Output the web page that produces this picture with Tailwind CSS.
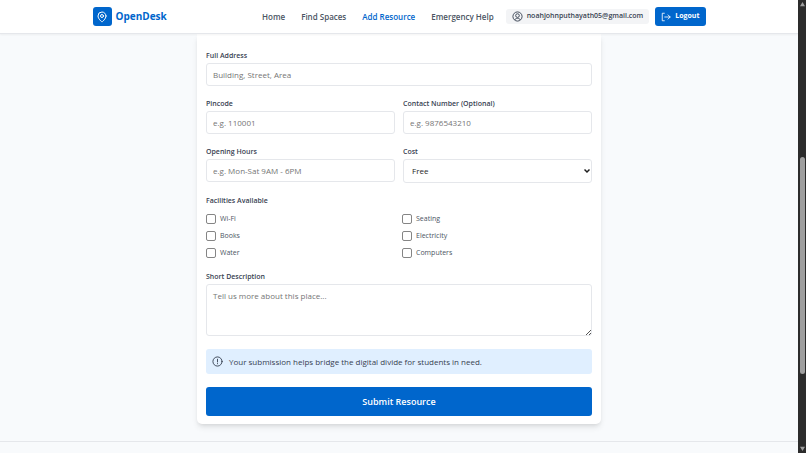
<!DOCTYPE html>
<html lang="en">
<head>
    <meta charset="UTF-8">
    <meta name="viewport" content="width=device-width, initial-scale=1.0">
    <title>Add Resource - OpenDesk</title>
    <script src="https://cdn.jsdelivr.net/npm/@tailwindcss/browser@4"></script>
</head>
<body class="flex h-screen overflow-hidden bg-[#f8fafc] font-['Open_Sans','Noto_Sans',sans-serif] text-[#374151]">
    <div class="flex-1 min-w-0 flex flex-col">
        <!-- Navigation Bar -->
        <header class="relative z-10 bg-white border-b border-gray-200 shadow-xs">
            <div class="max-w-[613px] mx-auto h-[33px] flex items-center justify-between">
                <a href="#" class="flex items-center gap-1">
                    <span class="flex items-center justify-center size-[19px] rounded-[3px] bg-[#0066cc] text-white">
                        <svg class="size-3" viewBox="0 0 24 24" fill="none" stroke="currentColor" stroke-width="2" stroke-linecap="round" stroke-linejoin="round">
                            <path d="M20 10c0 6-8 12-8 12s-8-6-8-12a8 8 0 0 1 16 0Z"/>
                            <circle cx="12" cy="10" r="3"/>
                        </svg>
                    </span>
                    <span class="text-[10px] font-bold text-[#0066cc]">OpenDesk</span>
                </a>
                <div class="flex items-center">
                    <nav class="flex items-center gap-4 text-[8px] font-semibold text-[#4b5563] whitespace-nowrap">
                        <a href="#">Home</a>
                        <a href="#">Find Spaces</a>
                        <a href="#" class="text-[#0066cc]">Add Resource</a>
                        <a href="#">Emergency Help</a>
                    </nav>
                    <div class="ml-3 h-[15px] px-[6px] flex items-center gap-1 rounded-[3px] bg-[#f3f4f6] text-[7px] font-semibold">
                        <svg class="size-[11px]" viewBox="0 0 24 24" fill="none" stroke="currentColor" stroke-width="2">
                            <circle cx="12" cy="12" r="10"/>
                            <circle cx="12" cy="10" r="4"/>
                            <path d="M6 19.500c1-2.500 3-3.500 6-3.500s5 1 6 3.500"/>
                        </svg>
                        <span>noahjohnputhayath05@gmail.com</span>
                    </div>
                    <button type="button" class="ml-[6px] h-[19px] px-[6px] flex items-center gap-1 rounded-[3px] bg-[#0066cc] text-white text-[7px] font-bold">
                        <svg class="size-[10px]" viewBox="0 0 24 24" fill="none" stroke="currentColor" stroke-width="2" stroke-linecap="round" stroke-linejoin="round">
                            <path d="M8 3H3v18h5M9 12h13M17 7l5 5-5 5"/>
                        </svg>
                        Logout
                    </button>
                </div>
            </div>
        </header>

        <!-- Resource Form -->
        <main class="w-full max-w-[404px] mx-auto">
            <form class="px-[9px] pt-4 pb-2 bg-white rounded-b-[5px] shadow-md text-[8px]">
                <div class="mb-3">
                    <label for="address" class="block mb-px text-[7px] leading-3 font-semibold">Full Address</label>
                    <input id="address" type="text" placeholder="Building, Street, Area" class="block w-full h-[23px] px-[6px] border border-gray-200 rounded-[3px] placeholder:text-[#757575]">
                </div>

                <div class="grid grid-cols-2 gap-x-2 mb-3">
                    <div>
                        <label for="pincode" class="block mb-px text-[7px] leading-3 font-semibold">Pincode</label>
                        <input id="pincode" type="text" placeholder="e.g. 110001" class="block w-full h-[23px] px-[6px] border border-gray-200 rounded-[3px] placeholder:text-[#757575]">
                    </div>
                    <div>
                        <label for="contact" class="block mb-px text-[7px] leading-3 font-semibold">Contact Number (Optional)</label>
                        <input id="contact" type="tel" placeholder="e.g. 9876543210" class="block w-full h-[23px] px-[6px] border border-gray-200 rounded-[3px] placeholder:text-[#757575]">
                    </div>
                </div>

                <div class="grid grid-cols-2 gap-x-2 mb-3">
                    <div>
                        <label for="hours" class="block mb-px text-[7px] leading-3 font-semibold">Opening Hours</label>
                        <input id="hours" type="text" placeholder="e.g. Mon-Sat 9AM - 6PM" class="block w-full h-[23px] px-[6px] border border-gray-200 rounded-[3px] placeholder:text-[#757575]">
                    </div>
                    <div>
                        <label for="cost" class="block mb-px text-[7px] leading-3 font-semibold">Cost</label>
                        <div class="relative">
                            <select id="cost" class="block appearance-none w-full h-6 px-2 border border-gray-200 rounded-[3px] bg-white text-[#1f1f1f]">
                                <option>Free</option>
                                <option>Paid</option>
                            </select>
                            <svg class="absolute right-[2px] top-[9px] size-[6px] pointer-events-none text-[#1f1f1f]" viewBox="0 0 12 12" fill="none" stroke="currentColor" stroke-width="3">
                                <path d="M1 3l5 5 5-5"/>
                            </svg>
                        </div>
                    </div>
                </div>

                <!-- Facilities -->
                <fieldset class="mb-3">
                    <legend class="mb-[6px] text-[7px] leading-3 font-semibold">Facilities Available</legend>
                    <div class="grid grid-cols-2 gap-x-[6px] gap-y-[5px] text-[7px] leading-3 text-[#4b5563]">
                        <label class="flex items-center gap-1"><input type="checkbox" class="appearance-none size-[10px] border border-[#858585] rounded-[2px] bg-white checked:bg-[#0066cc]">Wi-Fi</label>
                        <label class="flex items-center gap-1"><input type="checkbox" class="appearance-none size-[10px] border border-[#858585] rounded-[2px] bg-white checked:bg-[#0066cc]">Seating</label>
                        <label class="flex items-center gap-1"><input type="checkbox" class="appearance-none size-[10px] border border-[#858585] rounded-[2px] bg-white checked:bg-[#0066cc]">Books</label>
                        <label class="flex items-center gap-1"><input type="checkbox" class="appearance-none size-[10px] border border-[#858585] rounded-[2px] bg-white checked:bg-[#0066cc]">Electricity</label>
                        <label class="flex items-center gap-1"><input type="checkbox" class="appearance-none size-[10px] border border-[#858585] rounded-[2px] bg-white checked:bg-[#0066cc]">Water</label>
                        <label class="flex items-center gap-1"><input type="checkbox" class="appearance-none size-[10px] border border-[#858585] rounded-[2px] bg-white checked:bg-[#0066cc]">Computers</label>
                    </div>
                </fieldset>

                <div class="mb-[13px]">
                    <label for="description" class="block mb-px text-[7px] leading-3 font-semibold">Short Description</label>
                    <div class="relative">
                        <textarea id="description" placeholder="Tell us more about this place..." class="block resize-none w-full h-[52px] px-[6px] py-[5px] leading-3 border border-gray-200 rounded-[3px] placeholder:text-[#757575]"></textarea>
                        <svg class="absolute right-px bottom-px size-[5px] pointer-events-none text-[#555555]" viewBox="0 0 5 5" fill="none" stroke="currentColor">
                            <path d="M0 5L5 0M3 5l2-2"/>
                        </svg>
                    </div>
                </div>

                <div class="mb-[13px] h-[25px] px-[6px] flex items-center gap-[6px] rounded-[3px] bg-[#e0efff]">
                    <svg class="size-[11px]" viewBox="0 0 24 24" fill="none" stroke="currentColor" stroke-width="2" stroke-linecap="round">
                        <circle cx="12" cy="12" r="10"/>
                        <path d="M12 7v6M12 16.500v.5"/>
                    </svg>
                    <p>Your submission helps bridge the digital divide for students in need.</p>
                </div>

                <button type="submit" class="block w-full h-[29px] rounded-[3px] bg-[#0066cc] text-white text-[9px] font-semibold">Submit Resource</button>
            </form>
        </main>

        <footer class="mt-[17px] flex-1 border-t border-gray-200"></footer>
    </div>

    <!-- Scrollbar -->
    <div class="w-2 flex flex-col items-center bg-[#2c2c2c] text-[#9f9f9f]" aria-hidden="true">
        <svg class="mt-[2px] size-[5px]" viewBox="0 0 6 6" fill="currentColor"><path d="M3 0l3 5H0z"/></svg>
        <div class="flex-1 flex flex-col">
            <div class="grow-[150]"></div>
            <div class="w-[5px] grow-[216] rounded-full bg-[#9f9f9f]"></div>
            <div class="grow-[72]"></div>
        </div>
        <svg class="mb-[2px] size-[5px]" viewBox="0 0 6 6" fill="currentColor"><path d="M3 6L0 1h6z"/></svg>
    </div>
</body>
</html>
